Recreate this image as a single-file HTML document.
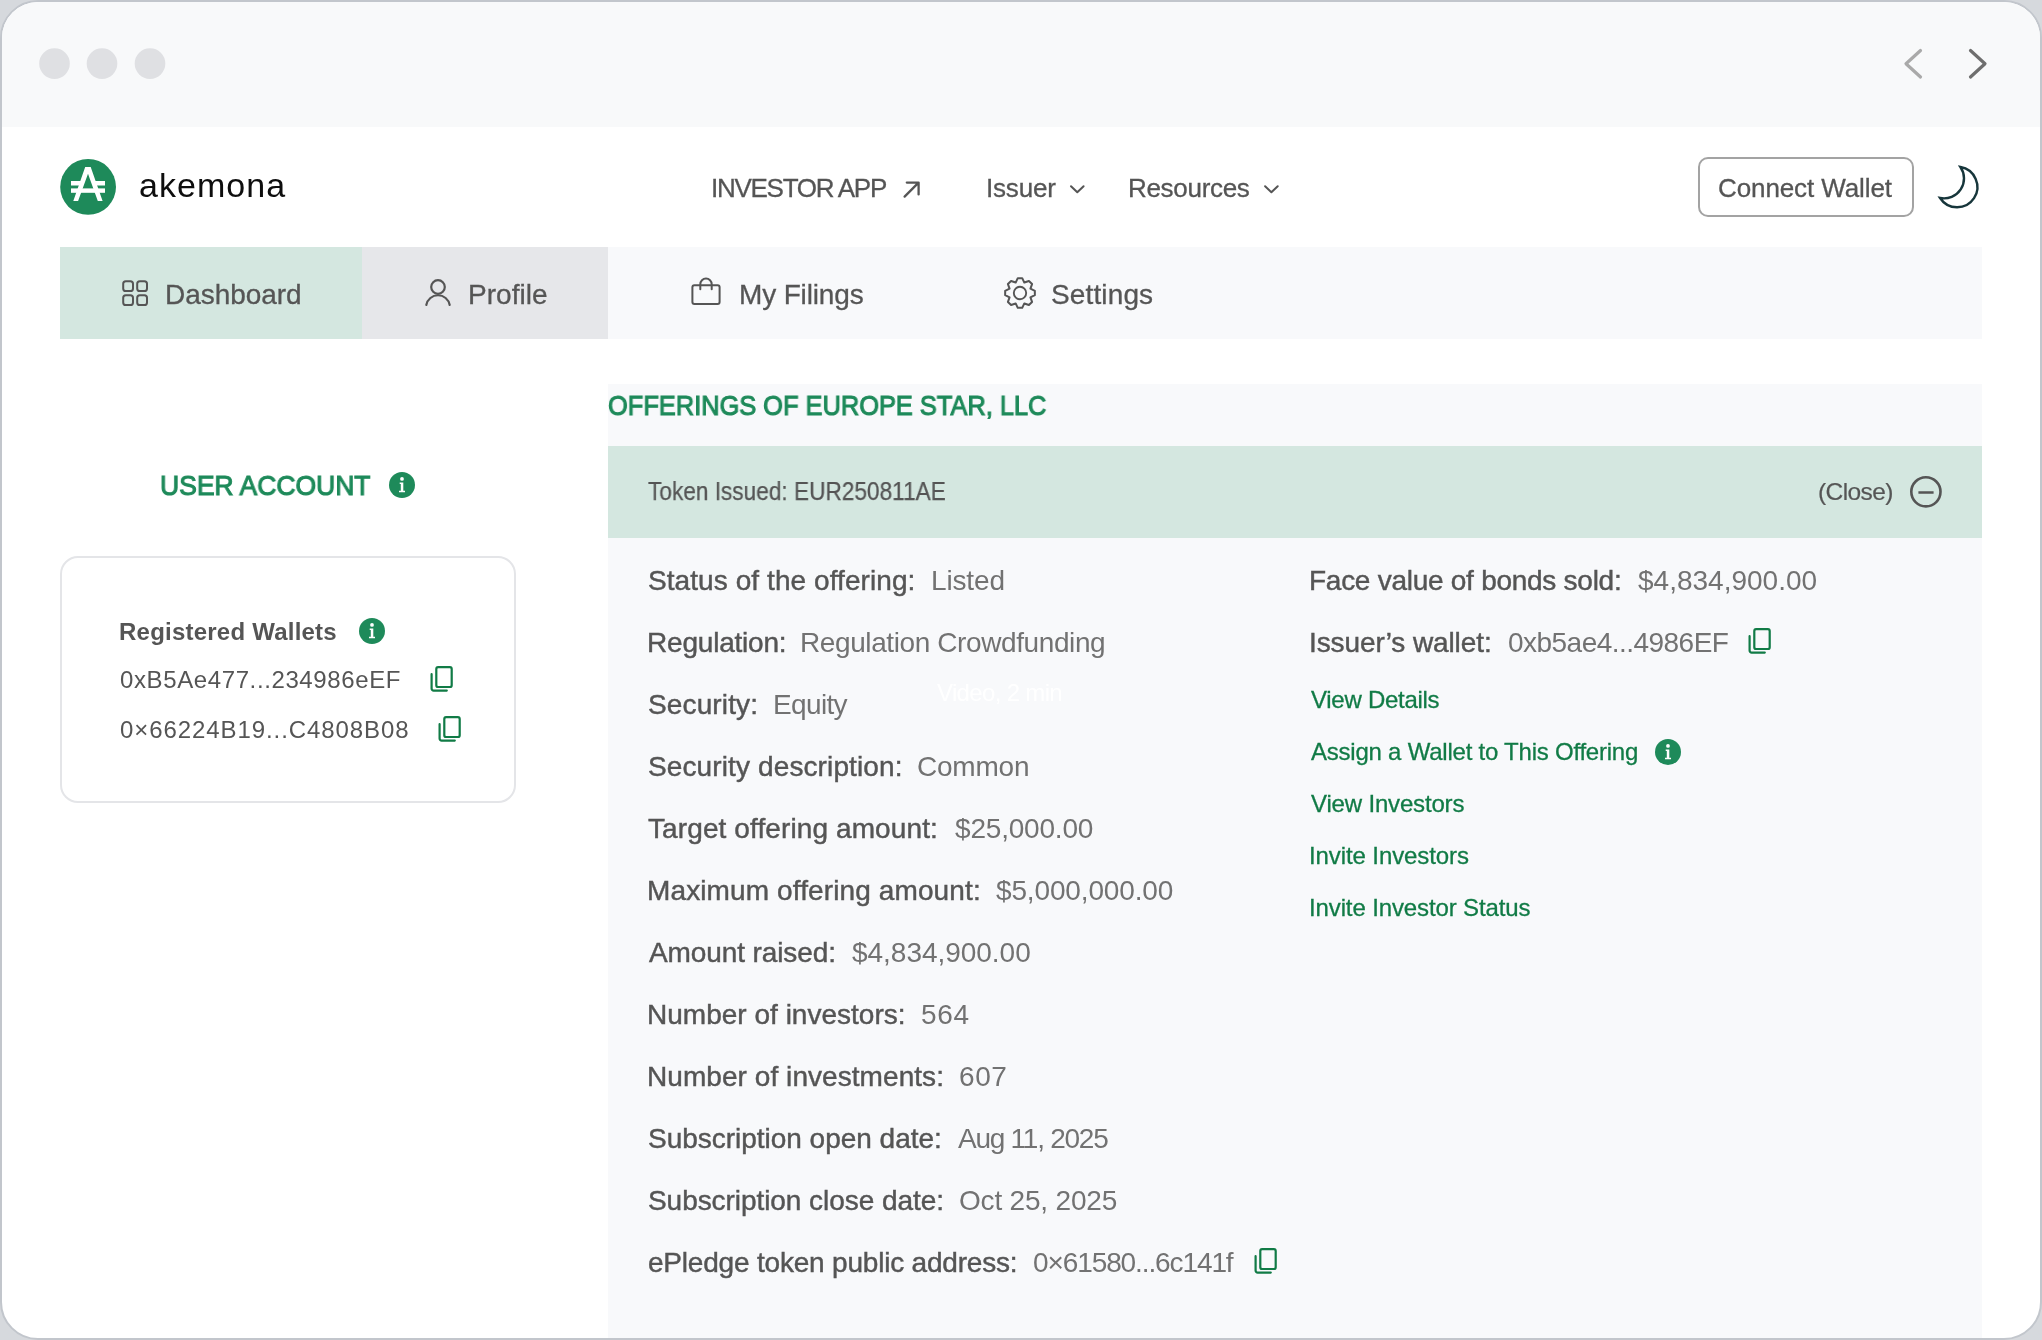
<!DOCTYPE html>
<html><head><meta charset="utf-8"><style>
html,body{margin:0;padding:0;}
body{width:2042px;height:1340px;overflow:hidden;background:#d6d9dd;position:relative;font-family:"Liberation Sans",sans-serif;-webkit-font-smoothing:antialiased;}
#frame{position:absolute;left:0;top:0;width:2038px;height:1336px;border:2px solid #c2c6cc;border-radius:38px;overflow:hidden;background:#fff;}
#tb{position:absolute;left:-2px;top:-2px;width:2042px;height:127px;background:#f8f9fa;}
.r{position:absolute;}
.t{position:absolute;white-space:nowrap;will-change:transform;}
svg{position:absolute;left:0;top:0;}
</style></head><body>
<div id="frame"><div id="tb"></div></div>
<div class="r" style="left:60px;top:247px;width:1922px;height:92px;background:#f8f9fb"></div>
<div class="r" style="left:60px;top:247px;width:301.5px;height:92px;background:#d4e7e0"></div>
<div class="r" style="left:361.5px;top:247px;width:246.5px;height:92px;background:#e6e7ea"></div>
<div class="r" style="left:608px;top:384px;width:1374px;height:954px;background:#f8f9fb"></div>
<div class="r" style="left:608px;top:446px;width:1374px;height:92px;background:#d4e7e0"></div>
<div class="r" style="left:60px;top:556px;width:452px;height:243px;border:2px solid #e4e5e8;border-radius:18px;"></div>
<div class="r" style="left:1698px;top:157px;width:212px;height:56px;border:2px solid #a3a3a3;border-radius:10px;"></div>
<div class="t" style="left:139.03px;top:168.21px;font-size:34px;line-height:34px;letter-spacing:1.046px;font-weight:400;color:#0e0e0e;">akemona</div>
<div class="t" style="left:710.67px;top:174.69px;font-size:26px;line-height:26px;letter-spacing:-1.273px;font-weight:400;color:#555555;-webkit-text-stroke:0.3px #555555;">INVESTOR APP</div>
<div class="t" style="left:986.38px;top:175.09px;font-size:26px;line-height:26px;letter-spacing:-0.180px;font-weight:400;color:#555555;-webkit-text-stroke:0.3px #555555;">Issuer</div>
<div class="t" style="left:1128.43px;top:175.09px;font-size:26px;line-height:26px;letter-spacing:-0.306px;font-weight:400;color:#555555;-webkit-text-stroke:0.3px #555555;">Resources</div>
<div class="t" style="left:1717.50px;top:175.29px;font-size:26px;line-height:26px;letter-spacing:-0.100px;font-weight:400;color:#555555;-webkit-text-stroke:0.3px #555555;">Connect Wallet</div>
<div class="t" style="left:165.10px;top:281.29px;font-size:28px;line-height:28px;letter-spacing:-0.047px;font-weight:400;color:#555555;-webkit-text-stroke:0.3px #555555;">Dashboard</div>
<div class="t" style="left:468.40px;top:281.29px;font-size:28px;line-height:28px;letter-spacing:0.037px;font-weight:400;color:#555555;-webkit-text-stroke:0.3px #555555;">Profile</div>
<div class="t" style="left:738.50px;top:281.29px;font-size:28px;line-height:28px;letter-spacing:-0.150px;font-weight:400;color:#555555;-webkit-text-stroke:0.3px #555555;">My Filings</div>
<div class="t" style="left:1051.40px;top:281.29px;font-size:28px;line-height:28px;letter-spacing:0.132px;font-weight:400;color:#555555;-webkit-text-stroke:0.3px #555555;">Settings</div>
<div class="t" style="left:159.54px;top:472.19px;font-size:28px;line-height:28px;letter-spacing:0.000px;font-weight:400;color:#1e8a5a;-webkit-text-stroke:1.1px #1e8a5a;transform:scaleX(0.9461);transform-origin:0 0;">USER ACCOUNT</div>
<div class="t" style="left:119.28px;top:619.58px;font-size:24px;line-height:24px;letter-spacing:0.226px;font-weight:700;color:#555555;">Registered Wallets</div>
<div class="t" style="left:120.03px;top:668.18px;font-size:24px;line-height:24px;letter-spacing:0.611px;font-weight:400;color:#555555;">0xB5Ae477...234986eEF</div>
<div class="t" style="left:120.03px;top:718.28px;font-size:24px;line-height:24px;letter-spacing:0.916px;font-weight:400;color:#555555;">0×66224B19...C4808B08</div>
<div class="t" style="left:608.02px;top:391.69px;font-size:28px;line-height:28px;letter-spacing:0.000px;font-weight:400;color:#1e8a5a;-webkit-text-stroke:1.1px #1e8a5a;transform:scaleX(0.9071);transform-origin:0 0;">OFFERINGS OF EUROPE STAR, LLC</div>
<div class="t" style="left:648.27px;top:478.63px;font-size:25px;line-height:25px;letter-spacing:0.000px;font-weight:400;color:#555555;-webkit-text-stroke:0.25px #555555;transform:scaleX(0.9055);transform-origin:0 0;">Token Issued: EUR250811AE</div>
<div class="t" style="left:1817.60px;top:480.26px;font-size:24.5px;line-height:24.5px;letter-spacing:-0.596px;font-weight:400;color:#555555;-webkit-text-stroke:0.2px #555555;">(Close)</div>
<div class="t" style="left:936.58px;top:680.68px;font-size:24px;line-height:24px;letter-spacing:-0.661px;font-weight:400;color:#ffffff;">Video, 2 min</div>
<div class="t" style="left:647.58px;top:567.29px;font-size:28px;line-height:28px;letter-spacing:0.076px;font-weight:400;color:#555555;-webkit-text-stroke:0.45px #555555;">Status of the offering:</div>
<div class="t" style="left:930.75px;top:567.29px;font-size:28px;line-height:28px;letter-spacing:-0.145px;font-weight:400;color:#727272;">Listed</div>
<div class="t" style="left:646.58px;top:629.29px;font-size:28px;line-height:28px;letter-spacing:-0.203px;font-weight:400;color:#555555;-webkit-text-stroke:0.45px #555555;">Regulation:</div>
<div class="t" style="left:800.45px;top:629.29px;font-size:28px;line-height:28px;letter-spacing:-0.399px;font-weight:400;color:#727272;">Regulation Crowdfunding</div>
<div class="t" style="left:647.58px;top:691.29px;font-size:28px;line-height:28px;letter-spacing:0.128px;font-weight:400;color:#555555;-webkit-text-stroke:0.45px #555555;">Security:</div>
<div class="t" style="left:772.95px;top:691.29px;font-size:28px;line-height:28px;letter-spacing:-0.645px;font-weight:400;color:#727272;">Equity</div>
<div class="t" style="left:647.58px;top:753.29px;font-size:28px;line-height:28px;letter-spacing:0.119px;font-weight:400;color:#555555;-webkit-text-stroke:0.45px #555555;">Security description:</div>
<div class="t" style="left:917.23px;top:753.29px;font-size:28px;line-height:28px;letter-spacing:-0.215px;font-weight:400;color:#727272;">Common</div>
<div class="t" style="left:648.20px;top:815.29px;font-size:28px;line-height:28px;letter-spacing:0.109px;font-weight:400;color:#555555;-webkit-text-stroke:0.45px #555555;">Target offering amount:</div>
<div class="t" style="left:954.65px;top:815.29px;font-size:28px;line-height:28px;letter-spacing:-0.197px;font-weight:400;color:#727272;">$25,000.00</div>
<div class="t" style="left:646.58px;top:877.29px;font-size:28px;line-height:28px;letter-spacing:0.118px;font-weight:400;color:#555555;-webkit-text-stroke:0.45px #555555;">Maximum offering amount:</div>
<div class="t" style="left:996.35px;top:877.29px;font-size:28px;line-height:28px;letter-spacing:-0.146px;font-weight:400;color:#727272;">$5,000,000.00</div>
<div class="t" style="left:648.83px;top:939.29px;font-size:28px;line-height:28px;letter-spacing:-0.108px;font-weight:400;color:#555555;-webkit-text-stroke:0.45px #555555;">Amount raised:</div>
<div class="t" style="left:852.35px;top:939.29px;font-size:28px;line-height:28px;letter-spacing:-0.029px;font-weight:400;color:#727272;">$4,834,900.00</div>
<div class="t" style="left:646.58px;top:1001.29px;font-size:28px;line-height:28px;letter-spacing:0.013px;font-weight:400;color:#555555;-webkit-text-stroke:0.45px #555555;">Number of investors:</div>
<div class="t" style="left:921.38px;top:1001.29px;font-size:28px;line-height:28px;letter-spacing:0.675px;font-weight:400;color:#727272;">564</div>
<div class="t" style="left:646.58px;top:1063.29px;font-size:28px;line-height:28px;letter-spacing:0.061px;font-weight:400;color:#555555;-webkit-text-stroke:0.45px #555555;">Number of investments:</div>
<div class="t" style="left:958.62px;top:1063.29px;font-size:28px;line-height:28px;letter-spacing:0.600px;font-weight:400;color:#727272;">607</div>
<div class="t" style="left:647.58px;top:1125.29px;font-size:28px;line-height:28px;letter-spacing:-0.019px;font-weight:400;color:#555555;-webkit-text-stroke:0.45px #555555;">Subscription open date:</div>
<div class="t" style="left:958.40px;top:1125.29px;font-size:28px;line-height:28px;letter-spacing:-1.252px;font-weight:400;color:#727272;">Aug 11, 2025</div>
<div class="t" style="left:647.58px;top:1187.29px;font-size:28px;line-height:28px;letter-spacing:-0.059px;font-weight:400;color:#555555;-webkit-text-stroke:0.45px #555555;">Subscription close date:</div>
<div class="t" style="left:958.75px;top:1187.29px;font-size:28px;line-height:28px;letter-spacing:-0.189px;font-weight:400;color:#727272;">Oct 25, 2025</div>
<div class="t" style="left:647.70px;top:1249.29px;font-size:28px;line-height:28px;letter-spacing:-0.198px;font-weight:400;color:#555555;-webkit-text-stroke:0.45px #555555;">ePledge token public address:</div>
<div class="t" style="left:1033.30px;top:1249.29px;font-size:28px;line-height:28px;letter-spacing:-1.103px;font-weight:400;color:#727272;">0×61580...6c141f</div>
<div class="t" style="left:1308.88px;top:567.29px;font-size:28px;line-height:28px;letter-spacing:-0.267px;font-weight:400;color:#555555;-webkit-text-stroke:0.45px #555555;">Face value of bonds sold:</div>
<div class="t" style="left:1638.45px;top:567.29px;font-size:28px;line-height:28px;letter-spacing:0.004px;font-weight:400;color:#727272;">$4,834,900.00</div>
<div class="t" style="left:1308.62px;top:628.79px;font-size:28px;line-height:28px;letter-spacing:-0.098px;font-weight:400;color:#555555;-webkit-text-stroke:0.45px #555555;">Issuer’s wallet:</div>
<div class="t" style="left:1507.90px;top:628.79px;font-size:28px;line-height:28px;letter-spacing:-0.530px;font-weight:400;color:#727272;">0xb5ae4...4986EF</div>
<div class="t" style="left:1310.83px;top:687.68px;font-size:24px;line-height:24px;letter-spacing:-0.275px;font-weight:400;color:#117b46;-webkit-text-stroke:0.3px #117b46;">View Details</div>
<div class="t" style="left:1310.95px;top:739.68px;font-size:24px;line-height:24px;letter-spacing:-0.228px;font-weight:400;color:#117b46;-webkit-text-stroke:0.3px #117b46;">Assign a Wallet to This Offering</div>
<div class="t" style="left:1310.83px;top:791.68px;font-size:24px;line-height:24px;letter-spacing:-0.171px;font-weight:400;color:#117b46;-webkit-text-stroke:0.3px #117b46;">View Investors</div>
<div class="t" style="left:1308.83px;top:843.68px;font-size:24px;line-height:24px;letter-spacing:-0.098px;font-weight:400;color:#117b46;-webkit-text-stroke:0.3px #117b46;">Invite Investors</div>
<div class="t" style="left:1308.83px;top:895.68px;font-size:24px;line-height:24px;letter-spacing:-0.125px;font-weight:400;color:#117b46;-webkit-text-stroke:0.3px #117b46;">Invite Investor Status</div>
<svg width="2042" height="1340" viewBox="0 0 2042 1340">
<circle cx="54.5" cy="63.6" r="15.3" fill="#dfe0e3"/>
<circle cx="102" cy="63.6" r="15.3" fill="#dfe0e3"/>
<circle cx="150" cy="63.6" r="15.3" fill="#dfe0e3"/>
<path d="M1920.5,50.5 L1906,63.7 L1920.5,77" fill="none" stroke="#a9a9a9" stroke-width="3.2" stroke-linecap="round" stroke-linejoin="round"/>
<path d="M1970.5,50.5 L1985,63.7 L1970.5,77" fill="none" stroke="#6e6e6e" stroke-width="3.2" stroke-linecap="round" stroke-linejoin="round"/>
<circle cx="88.1" cy="186.9" r="27.9" fill="#1e8a5a"/>
<path d="M85.2,167 H90.7 L102.6,201 H97.8 L88,173.8 L78.1,201 H73.3 Z" fill="#fff"/>
<rect x="71" y="181" width="11" height="4.5" fill="#fff"/><rect x="94" y="181" width="11" height="4.5" fill="#fff"/><rect x="71" y="188.4" width="34" height="4.4" fill="#fff"/>
<path d="M904.6,196.6 L918.3,182.9 M906.8,182.6 H918.6 V194.4" fill="none" stroke="#555555" stroke-width="2.3" stroke-linecap="round" stroke-linejoin="round"/>
<path d="M1071.0,186.2 L1077.3,192.3 L1083.6,186.2" fill="none" stroke="#555555" stroke-width="2" stroke-linecap="round" stroke-linejoin="round"/>
<path d="M1265.1000000000001,186.2 L1271.4,192.3 L1277.7,186.2" fill="none" stroke="#555555" stroke-width="2" stroke-linecap="round" stroke-linejoin="round"/>
<path d="M1960.5,166.3 A21,21 0 1 1 1939.4,198.4 A20.7,20.7 0 0 0 1960.5,166.3 Z" fill="none" stroke="#17363b" stroke-width="2.5" stroke-linejoin="miter" stroke-miterlimit="6" transform="translate(1958.5,187) scale(0.965) translate(-1958.5,-187)"/>
<rect x="123.2" y="281.2" width="9.8" height="9.8" rx="2.6" fill="none" stroke="#555555" stroke-width="2"/>
<rect x="137.2" y="281.2" width="9.8" height="9.8" rx="2.6" fill="none" stroke="#555555" stroke-width="2"/>
<rect x="123.2" y="295.2" width="9.8" height="9.8" rx="2.6" fill="none" stroke="#555555" stroke-width="2"/>
<rect x="137.2" y="295.2" width="9.8" height="9.8" rx="2.6" fill="none" stroke="#555555" stroke-width="2"/>
<circle cx="438" cy="287" r="6.8" fill="none" stroke="#555555" stroke-width="2.2"/>
<path d="M426.3,305 A11.9,11.9 0 0 1 449.7,305" fill="none" stroke="#555555" stroke-width="2.2" stroke-linecap="round"/>
<rect x="692.4" y="285.3" width="27.2" height="18.8" rx="2" fill="none" stroke="#555555" stroke-width="2"/>
<path d="M700.3,289.2 V284.3 A5.7,5.7 0 0 1 711.7,284.3 V289.2" fill="none" stroke="#555555" stroke-width="2" stroke-linecap="round"/>
<path d="M1017.78,278.16 L1022.22,278.16 L1024.32,282.56 L1028.92,280.94 L1032.06,284.08 L1030.44,288.68 L1034.84,290.78 L1034.84,295.22 L1030.44,297.32 L1032.06,301.92 L1028.92,305.06 L1024.32,303.44 L1022.22,307.84 L1017.78,307.84 L1015.68,303.44 L1011.08,305.06 L1007.94,301.92 L1009.56,297.32 L1005.16,295.22 L1005.16,290.78 L1009.56,288.68 L1007.94,284.08 L1011.08,280.94 L1015.68,282.56 Z" fill="none" stroke="#555555" stroke-width="2" stroke-linejoin="round"/>
<circle cx="1020" cy="293" r="6.2" fill="none" stroke="#555555" stroke-width="1.9"/>
<g transform="translate(389.00,472.00) scale(1.0)"><circle cx="13" cy="13" r="13" fill="#1e8a5a"/><circle cx="13" cy="6.9" r="1.9" fill="#fff"/><path d="M10.7,10.4 H14.3 V18.7 H16 V20.2 H10 V18.7 H11.8 V11.9 H10.7 Z" fill="#fff"/></g>
<g transform="translate(359.00,618.00) scale(1.0)"><circle cx="13" cy="13" r="13" fill="#1e8a5a"/><circle cx="13" cy="6.9" r="1.9" fill="#fff"/><path d="M10.7,10.4 H14.3 V18.7 H16 V20.2 H10 V18.7 H11.8 V11.9 H10.7 Z" fill="#fff"/></g>
<g transform="translate(1655.00,739.00) scale(1.0)"><circle cx="13" cy="13" r="13" fill="#1e8a5a"/><circle cx="13" cy="6.9" r="1.9" fill="#fff"/><path d="M10.7,10.4 H14.3 V18.7 H16 V20.2 H10 V18.7 H11.8 V11.9 H10.7 Z" fill="#fff"/></g>
<g transform="translate(430,666)" fill="none" stroke="#117b46" stroke-width="2.2" stroke-linecap="round" stroke-linejoin="round"><rect x="6.3" y="1.2" width="15.4" height="19.8" rx="1.8"/><path d="M1.6,8.2 V22.6 a2,2 0 0 0 2,2 H16.8"/></g>
<g transform="translate(438,716)" fill="none" stroke="#117b46" stroke-width="2.2" stroke-linecap="round" stroke-linejoin="round"><rect x="6.3" y="1.2" width="15.4" height="19.8" rx="1.8"/><path d="M1.6,8.2 V22.6 a2,2 0 0 0 2,2 H16.8"/></g>
<g transform="translate(1748,628)" fill="none" stroke="#117b46" stroke-width="2.2" stroke-linecap="round" stroke-linejoin="round"><rect x="6.3" y="1.2" width="15.4" height="19.8" rx="1.8"/><path d="M1.6,8.2 V22.6 a2,2 0 0 0 2,2 H16.8"/></g>
<g transform="translate(1254,1248)" fill="none" stroke="#117b46" stroke-width="2.2" stroke-linecap="round" stroke-linejoin="round"><rect x="6.3" y="1.2" width="15.4" height="19.8" rx="1.8"/><path d="M1.6,8.2 V22.6 a2,2 0 0 0 2,2 H16.8"/></g>
<circle cx="1925.9" cy="491.8" r="14.6" fill="none" stroke="#555555" stroke-width="2.6"/><path d="M1918.4,492.5 H1933.6" stroke="#555555" stroke-width="2.5"/>
</svg>
</body></html>
